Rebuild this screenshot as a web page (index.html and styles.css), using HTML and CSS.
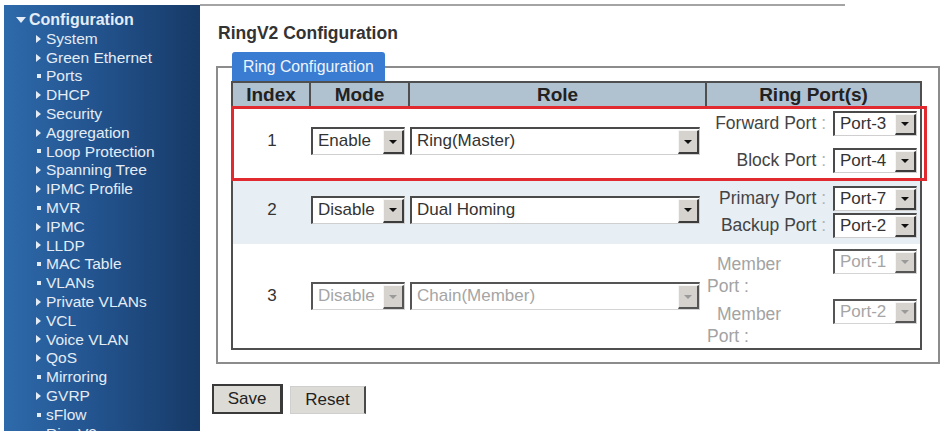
FILE: index.html
```html
<!DOCTYPE html>
<html>
<head>
  <meta charset="UTF-8">
  <title>RingV2 Configuration</title>
  <link rel="stylesheet" href="styles.css">
</head>
<body>
  <div class="page">
    <nav class="menu">
      <div class="menu-head">Configuration</div>
      <ul>
        <li class="folder">System</li>
        <li class="folder">Green Ethernet</li>
        <li class="leaf">Ports</li>
        <li class="folder">DHCP</li>
        <li class="folder">Security</li>
        <li class="folder">Aggregation</li>
        <li class="leaf">Loop Protection</li>
        <li class="folder">Spanning Tree</li>
        <li class="folder">IPMC Profile</li>
        <li class="leaf">MVR</li>
        <li class="folder">IPMC</li>
        <li class="folder">LLDP</li>
        <li class="leaf">MAC Table</li>
        <li class="leaf">VLANs</li>
        <li class="folder">Private VLANs</li>
        <li class="folder">VCL</li>
        <li class="folder">Voice VLAN</li>
        <li class="folder">QoS</li>
        <li class="leaf">Mirroring</li>
        <li class="folder">GVRP</li>
        <li class="leaf">sFlow</li>
        <li class="leaf">RingV2</li>
      </ul>
    </nav>

    <main class="content">
      <div class="topline"></div>
      <h1>RingV2 Configuration</h1>

      <fieldset class="panel">
        <legend>Ring Configuration</legend>
        <div class="grid-wrap">
          <table class="ring">
            <colgroup>
              <col style="width:78px">
              <col style="width:99px">
              <col style="width:297px">
              <col style="width:213px">
            </colgroup>
            <thead>
              <tr><th>Index</th><th>Mode</th><th>Role</th><th>Ring Port(s)</th></tr>
            </thead>
            <tbody>
              <tr class="r1">
                <td class="idx">1</td>
                <td><span class="select mode"><span class="val">Enable</span><span class="arrow"></span></span></td>
                <td><span class="select role"><span class="val">Ring(Master)</span><span class="arrow"></span></span></td>
                <td class="ports-cell">
                  <div class="ports">
                    <div class="pline"><span class="lbl">Forward Port <span class="colon">:</span></span><span class="select port"><span class="val">Port-3</span><span class="arrow"></span></span></div>
                    <div class="pline"><span class="lbl">Block Port <span class="colon">:</span></span><span class="select port"><span class="val">Port-4</span><span class="arrow"></span></span></div>
                  </div>
                </td>
              </tr>
              <tr class="r2">
                <td class="idx">2</td>
                <td><span class="select mode"><span class="val">Disable</span><span class="arrow"></span></span></td>
                <td><span class="select role"><span class="val">Dual Homing</span><span class="arrow"></span></span></td>
                <td class="ports-cell">
                  <div class="ports">
                    <div class="pline"><span class="lbl">Primary Port <span class="colon">:</span></span><span class="select port"><span class="val">Port-7</span><span class="arrow"></span></span></div>
                    <div class="pline"><span class="lbl">Backup Port <span class="colon">:</span></span><span class="select port"><span class="val">Port-2</span><span class="arrow"></span></span></div>
                  </div>
                </td>
              </tr>
              <tr class="r3">
                <td class="idx">3</td>
                <td><span class="select mode off"><span class="val">Disable</span><span class="arrow"></span></span></td>
                <td><span class="select role off"><span class="val">Chain(Member)</span><span class="arrow"></span></span></td>
                <td class="ports-cell">
                  <div class="ports">
                    <div class="pline off"><span class="lbl"><span class="first">Member</span>Port :</span><span class="select port off"><span class="val">Port-1</span><span class="arrow"></span></span></div>
                    <div class="pline off"><span class="lbl"><span class="first">Member</span>Port :</span><span class="select port off"><span class="val">Port-2</span><span class="arrow"></span></span></div>
                  </div>
                </td>
              </tr>
            </tbody>
          </table>
          <div class="mark"></div>
        </div>
      </fieldset>

      <div class="actions">
        <button class="btn default">Save</button>
        <button class="btn">Reset</button>
      </div>
    </main>
  </div>
</body>
</html>
```

FILE: styles.css
```css
body {
  margin: 0;
  background: #fff;
  font-family: "Liberation Sans", Arial, sans-serif;
  overflow: hidden;
}

.page {
  display: flex;
  height: 431px;
}

/* left menu */
.menu {
  flex-shrink: 0;
  width: 196px;
  margin: 5px 0 0 4px;
  padding-top: 6px;
  background: linear-gradient(to right, #2e6aab 0%, #23548f 45%, #173a67 100%);
  color: #e4ecf6;
  font-size: 15.5px;
  line-height: 18.8px;
  overflow: hidden;
}

.menu-head {
  font-weight: bold;
  font-size: 16px;
  padding-left: 12px;
}

.menu-head::before {
  content: "";
  display: inline-block;
  vertical-align: middle;
  margin: -2px 3px 0 0;
  border-left: 5px solid transparent;
  border-right: 5px solid transparent;
  border-top: 6px solid #e4ecf6;
}

.menu ul {
  list-style: none;
  margin: 0;
  padding: 0;
}

.menu li {
  padding-left: 32px;
  white-space: nowrap;
}

.menu li::before {
  content: "";
  display: inline-block;
  vertical-align: middle;
  margin-top: -2px;
}

.menu li.folder::before {
  border-top: 4px solid transparent;
  border-bottom: 4px solid transparent;
  border-left: 5px solid #e4ecf6;
  margin-right: 5px;
}

.menu li.leaf::before {
  width: 4px;
  height: 4px;
  background: #e4ecf6;
  margin-left: 1px;
  margin-right: 5px;
}

/* main area */
.content {
  flex: 1;
  padding-left: 16px;
}

.topline {
  width: 645px;
  margin: 4px 0 0 -16px;
  border-top: 2px solid #a4a4a4;
}

h1 {
  font-size: 17.5px;
  line-height: 22px;
  color: #333;
  margin: 16px 0 8px 2px;
}

.panel {
  width: 724px;
  box-sizing: border-box;
  margin: 0;
  padding: 0 16px 12px 13px;
  border: 2px solid #8c8c8c;
}

.panel legend {
  box-sizing: border-box;
  height: 29px;
  line-height: 29px;
  margin-left: 1px;
  padding: 0 11px;
  font-size: 15.8px;
  color: #eef4fb;
  background: #3a7cd2;
  border-radius: 3px 3px 0 0;
}

.grid-wrap {
  position: relative;
}

.ring {
  width: 691px;
  table-layout: fixed;
  border-collapse: separate;
  border-spacing: 0;
  border: 2px solid #4f4f4f;
  font-size: 17px;
  color: #333;
}

.ring th {
  box-sizing: border-box;
  height: 24px;
  padding: 0;
  font-size: 19px;
  color: #222;
  background: #b0c1d0;
  border-right: 2px solid #4f4f4f;
}

.ring th:last-child {
  border-right: none;
}

.ring td {
  padding: 0;
  vertical-align: middle;
}

.ring td.idx {
  text-align: center;
}

.ring tr.r1 { height: 74px; }
.ring tr.r2 { height: 61px; }
.ring tr.r3 { height: 104px; }

.ring tr.r1 td,
.ring tr.r2 td {
  padding-bottom: 6px;
}

.ring tr.r2 td {
  background: #e7eef4;
}

.ring td.ports-cell {
  vertical-align: top;
  padding: 4px 0 0;
}

.ring tr.r2 td.ports-cell,
.ring tr.r3 td.ports-cell {
  padding-top: 5px;
}

.ports {
  display: flex;
  flex-direction: column;
  row-gap: 12px;
}

.r2 .ports,
.r3 .ports {
  row-gap: 2px;
}

.pline {
  display: flex;
  align-items: center;
}

.pline .lbl {
  width: 121px;
  padding-right: 2px;
  box-sizing: border-box;
  text-align: right;
  white-space: nowrap;
  font-size: 17.5px;
  color: #444;
}

.lbl .colon {
  color: #b4b4b4;
}

.pline.off {
  align-items: flex-start;
}

.pline.off .lbl {
  margin-top: 4px;
  text-align: left;
  white-space: normal;
  line-height: 22px;
  color: #a3a3a3;
}

.lbl .first {
  display: block;
  padding-left: 10px;
}

/* classic select boxes */
.select {
  display: inline-flex;
  box-sizing: border-box;
  height: 28px;
  vertical-align: middle;
  background: #fff;
  border-style: solid;
  border-width: 2px 1px 1px 2px;
  border-color: #4a4a4a #cfcfcf #cfcfcf #4a4a4a;
}

.select .val {
  flex: 1;
  padding-left: 5px;
  line-height: 24px;
  white-space: nowrap;
  overflow: hidden;
}

.select .arrow {
  display: flex;
  align-items: center;
  justify-content: center;
  width: 18px;
  margin: 1px 0 0;
  background: #d6d3ce;
  border-style: solid;
  border-width: 1px 2px 2px 1px;
  border-color: #f6f6f6 #3c3c3c #3c3c3c #f6f6f6;
}

.select .arrow::after {
  content: "";
  border-left: 4px solid transparent;
  border-right: 4px solid transparent;
  border-top: 4px solid #111;
}

.select.mode { width: 94px; }
.select.role { width: 290px; }

.select.port {
  width: 84px;
  height: 25px;
  margin-left: 5px;
}

.select.port .val {
  line-height: 21px;
}

.select.off {
  border-color: #555 #d4d4d4 #d4d4d4 #555;
}

.select.off .val {
  color: #a5a5a5;
}

.select.off .arrow {
  border-color: #f6f6f6 #555 #555 #f6f6f6;
}

.select.off .arrow::after {
  border-top-color: #9a9a9a;
}

/* the red highlight drawn over the first row */
.mark {
  position: absolute;
  left: 0;
  top: 25px;
  width: 696px;
  height: 75px;
  box-sizing: border-box;
  border: 3px solid #e02a2f;
  pointer-events: none;
}

.actions {
  display: flex;
  align-items: flex-end;
  gap: 7px;
  margin: 20px 0 0 -4px;
}

.btn {
  width: 76px;
  height: 28px;
  padding: 0;
  font-family: inherit;
  font-size: 17px;
  color: #222;
  background: #dddbd6;
  border: 1px solid #cfcfcf;
  border-right: 2px solid #4a4a4a;
}

.btn.default {
  width: 71px;
  height: 30px;
  border: 2px solid #3a3a3a;
  border-right-width: 3px;
}
```
